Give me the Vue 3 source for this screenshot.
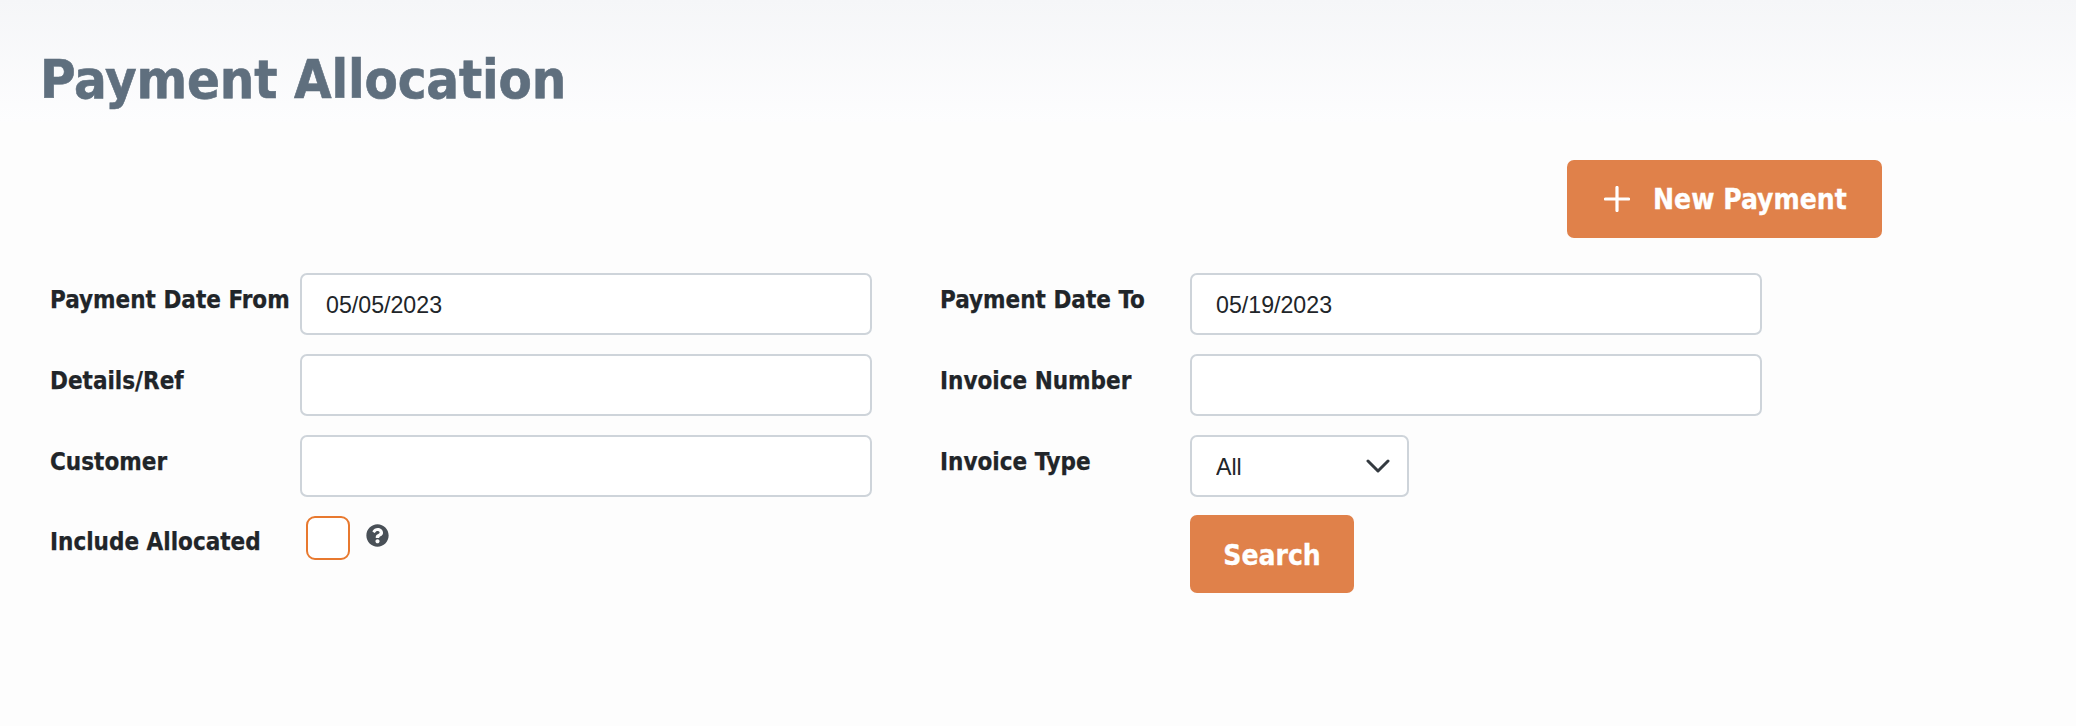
<script setup>
import { ref } from 'vue'

const dateFrom = ref('05/05/2023')
const dateTo = ref('05/19/2023')
const details = ref('')
const invoiceNumber = ref('')
const customer = ref('')
const invoiceType = ref('All')
const includeAllocated = ref(false)
</script>

<template>
  <div class="page">
    <header class="page-head">
      <h1>Payment Allocation</h1>
    </header>

    <div class="actions">
      <button class="btn btn-new">
        <svg class="plus" viewBox="0 0 26 26" width="26" height="26">
          <path d="M13 1.5v23M1.5 13h23" fill="none" stroke="#fff" stroke-width="3.2" stroke-linecap="round" />
        </svg>
        New Payment
      </button>
    </div>

    <form class="filters" @submit.prevent>
      <label class="field-label">Payment Date From</label>
      <input v-model="dateFrom" class="field" type="text" />
      <label class="field-label right">Payment Date To</label>
      <input v-model="dateTo" class="field" type="text" />

      <label class="field-label">Details/Ref</label>
      <input v-model="details" class="field" type="text" />
      <label class="field-label right">Invoice Number</label>
      <input v-model="invoiceNumber" class="field" type="text" />

      <label class="field-label">Customer</label>
      <input v-model="customer" class="field" type="text" />
      <label class="field-label right">Invoice Type</label>
      <div class="select-wrap">
        <select v-model="invoiceType" class="field select">
          <option>All</option>
          <option>Sales</option>
          <option>Credit</option>
        </select>
        <svg class="chevron" viewBox="0 0 24 14" width="24" height="14">
          <path d="M2 2l10 10L22 2" fill="none" stroke="#343a40" stroke-width="3" stroke-linecap="round" stroke-linejoin="round" />
        </svg>
      </div>

      <label class="field-label label-check">Include Allocated</label>
      <div class="check-row">
        <input v-model="includeAllocated" class="check" type="checkbox" />
        <svg class="help" viewBox="0 0 512 512" width="23" height="23">
          <path fill="#495057" d="M504 256c0 136.997-111.043 248-248 248S8 392.997 8 256C8 119.083 119.043 8 256 8s248 111.083 248 248zM262.655 90c-54.497 0-89.255 22.957-116.549 63.758-3.536 5.286-2.353 12.415 2.715 16.258l34.699 26.31c5.205 3.947 12.621 3.008 16.665-2.122 17.864-22.658 30.113-35.797 57.303-35.797 20.429 0 45.698 13.148 45.698 32.958 0 14.976-12.363 22.667-32.534 33.976C247.128 238.528 216 254.941 216 296v4c0 6.627 5.373 12 12 12h56c6.627 0 12-5.373 12-12v-1.333c0-28.462 83.186-29.647 83.186-106.667 0-58.002-60.165-102-116.531-102zM256 338c-25.365 0-46 20.635-46 46 0 25.364 20.635 46 46 46s46-20.636 46-46c0-25.365-20.635-46-46-46z" />
        </svg>
      </div>
      <div></div>
      <div class="search-cell">
        <button class="btn btn-search">Search</button>
      </div>
    </form>
  </div>
</template>

<style scoped>
.page {
  height: 726px;
  overflow: hidden;
  background: #fdfdfd;
  font-family: "DejaVu Sans", Verdana, sans-serif;
  font-stretch: condensed;
}

.page-head {
  height: 122px;
  padding: 45px 0 0 40px;
  box-sizing: border-box;
  background: linear-gradient(#f5f6f8, #fdfdfe);
}

h1 {
  margin: 0;
  font-size: 54px;
  line-height: 70px;
  font-weight: 700;
  letter-spacing: -0.15px;
  color: #5f6f7e;
  -webkit-text-stroke: 0.6px #5f6f7e;
}

.actions {
  display: flex;
  justify-content: flex-end;
  padding: 38px 194px 0 0;
}

.btn {
  border: none;
  border-radius: 7px;
  background: #e0814a;
  color: #fff;
  font-family: inherit;
  font-stretch: condensed;
  font-weight: 700;
  font-size: 28px;
  -webkit-text-stroke: 0.3px #fff;
  cursor: pointer;
}

.btn-new {
  display: flex;
  align-items: center;
  gap: 23px;
  width: 315px;
  height: 78px;
  padding: 0 0 0 37px;
}

.plus {
  flex: none;
}

.filters {
  display: grid;
  grid-template-columns: 250px 572px 318px 572px;
  grid-template-rows: 62px 62px 62px auto;
  row-gap: 19px;
  padding: 35px 0 0 50px;
}

.field-label {
  padding-top: 12px;
  font-size: 24px;
  line-height: 30px;
  font-weight: 700;
  color: #212529;
  white-space: nowrap;
  -webkit-text-stroke: 0.25px #212529;
}

.label-check {
  padding-top: 11px;
}

.right {
  padding-left: 68px;
}

.field {
  width: 100%;
  height: 62px;
  box-sizing: border-box;
  padding: 2px 24px 0;
  border: 2px solid #ced4da;
  border-radius: 7px;
  background: #fff;
  color: #212529;
  font-family: "Liberation Sans", Arial, sans-serif;
  font-size: 23.2px;
  outline: none;
}

.select-wrap {
  position: relative;
  width: 219px;
}

.select {
  appearance: none;
  -webkit-appearance: none;
}

.chevron {
  position: absolute;
  right: 19px;
  top: 24px;
  pointer-events: none;
}

.check-row {
  display: flex;
  align-items: flex-start;
  gap: 16px;
  padding: 0 0 0 6px;
}

.check {
  appearance: none;
  -webkit-appearance: none;
  width: 44px;
  height: 44px;
  margin: 0;
  border: 2px solid #e8792f;
  border-radius: 9px;
  background: #fff;
  flex: none;
}

.help {
  margin-top: 8px;
}

.btn-search {
  display: block;
  width: 164px;
  height: 78px;
  margin-top: -1px;
  padding: 2px 0 0;
}
</style>

<style>
html, body {
  margin: 0;
  background: #fdfdfd;
}
</style>
